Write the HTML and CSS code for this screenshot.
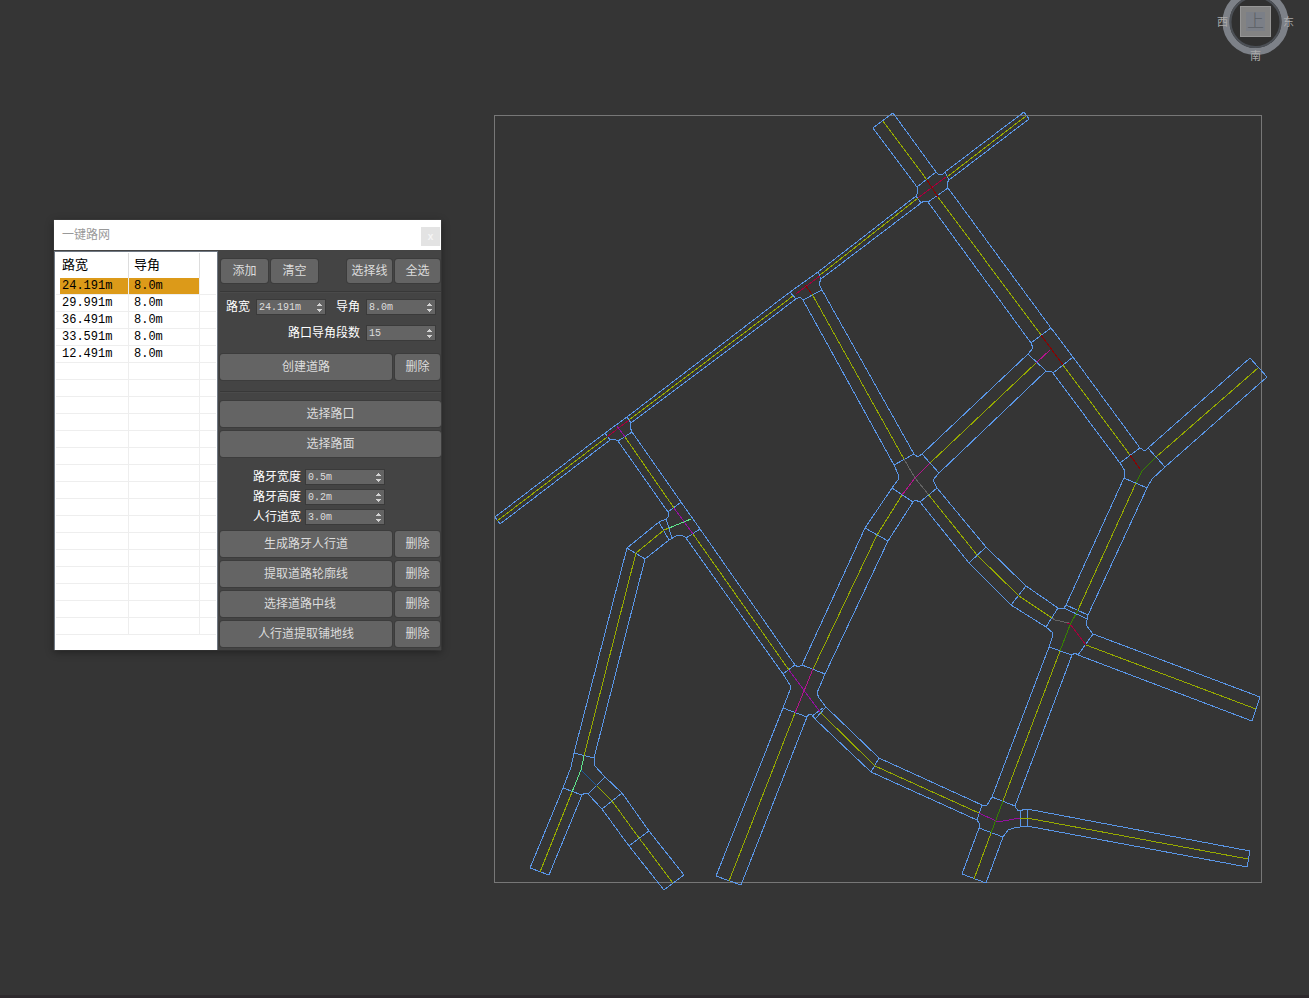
FILE: index.html
```html
<!DOCTYPE html>
<html lang="zh-CN">
<head>
    <meta charset="UTF-8">
    <meta name="viewport" content="width=device-width, initial-scale=1.0">
    <title>一键路网</title>
    <link rel="stylesheet" href="styles.css">
</head>
<body>
    <svg width="0" height="0" class="defs">
        <symbol id="spin" viewBox="0 0 5 9">
            <path d="M2 0h1v1h1v1h1v1H0V2h1V1h1z M0 6h5v1H4v1H3v1H2V8H1V7H0z"/>
        </symbol>
    </svg>

    <main class="viewport">
        <!-- road network -->
        <svg class="roads" viewBox="484 104 790 790">
            <rect class="frame" x="494.5" y="115.5" width="767" height="767"/>
            <g class="edge">
                <!-- north crossing -->
                <path d="M917 187L873 128L893 113L936 172L917 187L918 192L916 196L921 203L924 201L928 202L948 188L947 183L949 180L945 172L943 174L938 174L936 172"/>
                <path d="M945 172L1024 112L1029 119L949 180"/>
                <path d="M928 202L1031 343M948 188L1051 328"/>
                <path d="M916 196L818 272M921 203L821 279"/>
                <!-- second crossing -->
                <path d="M818 272L821 279L819 284L822 290L803 300L800 297L796 299L790 292L818 272"/>
                <path d="M803 300L894 465M822 290L914 454"/>
                <path d="M790 292L627 417M796 299L631 423"/>
                <!-- west crossing -->
                <path d="M627 417L631 423L630 427L632 432L618 441L614 439L610 440L605 433Z"/>
                <path d="M605 433L495 517L500 524L610 440"/>
                <path d="M618 441L668 512L669 516L666 519L659 522L627 548L574 753L571 767L563 788L530 868L549 875L582 795L563 788"/>
                <path d="M632 432L681 502L700 529L686 538L682 535L676 536L669 540L645 559L594 758L594 765L605 777L622 793L649 831L684 875L664 890L629 846L602 809L588 794L585 793L582 795"/>
                <path d="M668 512L681 502M666 519L672 538M659 522L669 540M627 548L645 559M574 753L594 758M605 777L588 794M622 793L602 809M649 831L629 846"/>
                <path d="M686 538L783 674L790 685L790 690L783 708L716 876L741 885L807 717L783 708"/>
                <path d="M700 529L795 665L798 667L802 665L865 528L892 488L898 480L898 474L894 465L914 454L918 457L922 454L1028 354L1033 348L1031 343L1051 328L1073 357L1053 373L1051 371L1046 371L939 473L933 480L937 488L920 502L915 500L913 502L888 541L825 674L817 693L819 698L826 707L879 758L982 805"/>
                <path d="M783 674L795 665M802 665L825 674M865 528L888 541M892 488L913 502M922 454L939 473M1028 354L1046 371"/>
                <path d="M807 717L809 714L812 715L815 719L871 772L977 820M826 707L815 719M823 708L812 716M879 758L871 772"/>
                <!-- middle road running south east -->
                <path d="M920 502L969 563L1011 605L1046 627L1053 633L1052 638L1049 647L992 797L987 805L982 805L977 820L979 823L979 828L962 874L986 883L1003 837L979 828"/>
                <path d="M937 488L986 547L1026 586L1058 608L1064 608L1066 605L1124 478L1125 471L1120 463L1053 373"/>
                <path d="M969 563L986 547M1011 605L1026 586M1046 627L1058 608M1049 647L1072 655M1066 605L1088 615M1064 608L1087 619"/>
                <path d="M1073 357L1140 448L1145 451L1148 448L1250 358L1267 377L1165 467L1152 479L1147 488L1088 615L1086 625L1093 634L1260 697L1252 721L1078 655L1075 653L1072 655L1015 806L1018 811L1027 809L1250 851L1247 867L1027 826L1014 828L1008 830L1003 837"/>
                <path d="M1120 463L1140 448M1148 448L1165 467M1124 478L1147 488M1093 634L1078 655M992 797L1015 806M1020 811V827M1027 809V826"/>
            </g>
            <g class="center">
                <path d="M883 121L927 180M938 197L1041 335M1063 365L1130 455M947 177L1026 116M918 198L820 275M793 296L629 420M607 437L497 521"/>
                <path d="M812 294L904 459M625 437L674 508M693 534L789 670M669 528L664 530L636 553L584 756M572 792L540 872"/>
                <path d="M597 786L612 801L639 838L673 883M813 669L877 535L902 495M795 713L729 881M820 712L875 766L979 813"/>
                <path d="M1036 363L930 463M928 494L977 555L1019 596L1052 618M1003 801L1060 651M991 833L974 879M1020 818L1027 818L1248 859"/>
                <path d="M1086 645L1256 709M1078 610L1136 483M1156 457L1258 368"/>
            </g>
            <path class="crimson" d="M918 198L946 177M796 294L820 276M607 437L629 420M1067 623L1070 624L1086 645"/>
            <path class="red" d="M927 180L938 197M1041 335L1063 365M1130 455L1140 469"/>
            <path class="purple" d="M617 426L625 437M674 508L693 534M789 670L820 712M979 813L996 821L1003 821L1020 818"/>
            <path class="magenta" d="M813 669L795 713M930 463L915 478L902 495M1036 363L1050 350"/>
            <path class="mint" d="M669 528L691 519M584 756L581 770L572 792"/>
            <path class="green" d="M1156 457L1142 471L1136 483M1078 610L1070 625L1060 651M1003 801L991 833"/>
            <path class="grey" d="M904 459L915 478L928 494M1052 618L1055 620L1069 623"/>
            <path class="red" d="M805 285L812 294"/>
            <path class="blue" d="M581 770L597 786"/>
        </svg>

        <!-- view cube -->
        <svg class="cube" viewBox="1212 0 88 64">
            <circle cx="1255.5" cy="22" r="29.5" class="ring"/>
            <circle cx="1255.5" cy="22" r="25" class="ring-inner"/>
            <rect x="1240.5" y="6.5" width="30" height="30" class="face"/>
            <rect x="1246" y="12" width="19" height="19" class="face-mark"/>
            <text x="1255.5" y="27" class="top">上</text>
            <text x="1222.5" y="26">西</text>
            <text x="1288.5" y="26">东</text>
            <text x="1255.5" y="60">南</text>
        </svg>

        <section class="window">
            <header class="titlebar">
                <h1>一键路网</h1>
                <button class="close" aria-label="关闭">x</button>
            </header>
            <div class="content">
                <div class="list">
                    <table>
                        <thead>
                            <tr><th>路宽</th><th>导角</th><th></th></tr>
                        </thead>
                        <tbody>
                            <tr class="selected"><td>24.191m</td><td>8.0m</td><td></td></tr>
                            <tr><td>29.991m</td><td>8.0m</td><td></td></tr>
                            <tr><td>36.491m</td><td>8.0m</td><td></td></tr>
                            <tr><td>33.591m</td><td>8.0m</td><td></td></tr>
                            <tr><td>12.491m</td><td>8.0m</td><td></td></tr>
                            <tr><td></td><td></td><td></td></tr>
                            <tr><td></td><td></td><td></td></tr>
                            <tr><td></td><td></td><td></td></tr>
                            <tr><td></td><td></td><td></td></tr>
                            <tr><td></td><td></td><td></td></tr>
                            <tr><td></td><td></td><td></td></tr>
                            <tr><td></td><td></td><td></td></tr>
                            <tr><td></td><td></td><td></td></tr>
                            <tr><td></td><td></td><td></td></tr>
                            <tr><td></td><td></td><td></td></tr>
                            <tr><td></td><td></td><td></td></tr>
                            <tr><td></td><td></td><td></td></tr>
                            <tr><td></td><td></td><td></td></tr>
                            <tr><td></td><td></td><td></td></tr>
                            <tr><td></td><td></td><td></td></tr>
                            <tr><td></td><td></td><td></td></tr>
                        </tbody>
                    </table>
                </div>

                <div class="tools">
                    <div class="toolbar">
                        <button>添加</button>
                        <button>清空</button>
                        <button class="push">选择线</button>
                        <button>全选</button>
                    </div>
                    <hr>
                    <div class="params">
                        <div class="field">
                            <label for="width">路宽</label>
                            <span class="spinner"><input type="text" id="width" value="24.191m"><svg><use href="#spin"/></svg></span>
                        </div>
                        <div class="field">
                            <label for="corner">导角</label>
                            <span class="spinner"><input type="text" id="corner" value="8.0m"><svg><use href="#spin"/></svg></span>
                        </div>
                        <div class="field wide">
                            <label for="segments">路口导角段数</label>
                            <span class="spinner"><input type="text" id="segments" value="15"><svg><use href="#spin"/></svg></span>
                        </div>
                    </div>
                    <div class="row">
                        <button>创建道路</button>
                        <button class="delete">删除</button>
                    </div>
                    <hr class="split">
                    <div class="stack">
                        <button>选择路口</button>
                        <button>选择路面</button>
                    </div>
                    <div class="sizes">
                        <div class="field">
                            <label for="curb-width">路牙宽度</label>
                            <span class="spinner"><input type="text" id="curb-width" value="0.5m"><svg><use href="#spin"/></svg></span>
                        </div>
                        <div class="field">
                            <label for="curb-height">路牙高度</label>
                            <span class="spinner"><input type="text" id="curb-height" value="0.2m"><svg><use href="#spin"/></svg></span>
                        </div>
                        <div class="field">
                            <label for="walk-width">人行道宽</label>
                            <span class="spinner"><input type="text" id="walk-width" value="3.0m"><svg><use href="#spin"/></svg></span>
                        </div>
                    </div>
                    <div class="stack">
                        <div class="row">
                            <button>生成路牙人行道</button>
                            <button class="delete">删除</button>
                        </div>
                        <div class="row">
                            <button>提取道路轮廓线</button>
                            <button class="delete">删除</button>
                        </div>
                        <div class="row offset">
                            <button>选择道路中线</button>
                            <button class="delete">删除</button>
                        </div>
                        <div class="row">
                            <button>人行道提取铺地线</button>
                            <button class="delete">删除</button>
                        </div>
                    </div>
                </div>
            </div>
        </section>
    </main>
</body>
</html>
```
FILE: styles.css
```css
* {
    box-sizing: border-box;
}

body {
    margin: 0;
    background-color: #353535;
    font-family: "Liberation Mono", "Noto Sans CJK SC", monospace;
    font-size: 12px;
}

.defs {
    position: absolute;
}

.viewport {
    position: relative;
    min-height: 100vh;
    overflow: hidden;
    border-bottom: 3px solid #2e2a2d;
}

/* drawing */
.roads {
    position: absolute;
    left: 484px;
    top: 104px;
    width: 790px;
    height: 790px;
    fill: none;
    shape-rendering: crispEdges;
}

.frame { stroke: #777; }
.edge { stroke: #5a96e6; }
.center { stroke: #96aa00; }
.crimson { stroke: #a5003c; }
.red { stroke: #8c0000; }
.purple { stroke: #960fa0; }
.magenta { stroke: #b4148c; }
.mint { stroke: #5fe68c; }
.green { stroke: #378200; }
.grey { stroke: #646464; }
.blue { stroke: #1e5a9b; }

.cube {
    position: absolute;
    top: 0;
    right: 9px;
    width: 88px;
    height: 64px;
    fill: #aaa;
    font-size: 11px;
    text-anchor: middle;
}

.ring {
    fill: none;
    stroke: #7d8188;
    stroke-width: 7;
}

.ring-inner {
    fill: #303030;
    stroke: #4b4f55;
    stroke-width: 2;
}

.face {
    fill: #838383;
    stroke: #969696;
}

.face-mark {
    fill: #7b7f87;
}

.top {
    fill: #5a5e64;
    font-size: 17px;
    font-weight: 300;
}

/* tool window */
.window {
    position: absolute;
    left: 54px;
    top: 220px;
    width: 387px;
    background-color: #444;
    box-shadow: 0 2px 8px rgba(0, 0, 0, 0.4), 0 0 1px #777;
}

.titlebar {
    display: flex;
    justify-content: space-between;
    height: 30px;
    padding-left: 8px;
    background-color: #fff;
}

.titlebar h1 {
    margin: 0;
    color: #999;
    font-size: 12px;
    font-weight: normal;
    line-height: 32px;
}

.close {
    width: 19px;
    height: 19px;
    margin: 7px 1px 0 0;
    padding: 0;
    border: none;
    background-color: #e3e3e3;
    color: #f5f5f5;
    font: bold 10px "Liberation Sans", sans-serif;
}

.content {
    display: flex;
    padding-top: 1px;
}

.list {
    width: 164px;
    padding: 1px;
    border: 1px solid #6f7883;
    border-bottom: none;
    background-color: #fff;
}

.list table {
    width: 100%;
    table-layout: fixed;
    border-collapse: separate;
    border-spacing: 0;
    color: #000;
}

.list th,
.list td {
    height: 17px;
    padding: 0 0 0 6px;
    border-right: 1px solid #eee;
    border-bottom: 1px solid #eee;
    line-height: 16px;
    text-align: left;
    font-weight: normal;
}

.list th {
    height: 25px;
    border-bottom: none;
    border-right-color: #ddd;
    font-size: 13px;
    line-height: 24px;
}

.list th:first-child { width: 73px; }
.list th:nth-child(2) { width: 71px; }

.list th:nth-child(2),
.list td:nth-child(2) {
    padding-left: 5px;
}

.list th:last-child,
.list td:last-child {
    border-right: none;
}

.selected td:first-child {
    background: linear-gradient(to right, #fff 4px, #dc9a19 4px);
}

.selected td:nth-child(2) {
    background-color: #dc9a19;
}

.tools {
    flex: 1;
    padding: 8px 0 3px 2px;
}

.tools button {
    height: 26px;
    padding: 2px 0 0;
    border: none;
    border-radius: 3px;
    box-shadow: 0 0 0 1px #3c3c3c;
    background-color: #646464;
    color: #dcdcdc;
    font-family: inherit;
    font-size: 12px;
    line-height: 24px;
}

.toolbar {
    display: flex;
    gap: 3px;
    padding: 0 1px;
}

.toolbar button {
    width: 47px;
    height: 24px;
    line-height: 22px;
}

.toolbar .push {
    margin-left: auto;
}

.toolbar .push,
.toolbar .push + button {
    width: 45px;
}

.tools hr {
    height: 2px;
    margin: 8px 0 6px;
    border: none;
    border-top: 1px solid #383838;
    border-bottom: 1px solid #4a4a4a;
}

.tools .split {
    margin: 11px 0 8px;
}

.params {
    display: flex;
    flex-wrap: wrap;
    justify-content: flex-end;
    gap: 10px;
    padding: 0 5px 13px 0;
}

.field {
    display: flex;
    align-items: center;
    gap: 5px;
    height: 16px;
    color: #fff;
    line-height: 16px;
}

.field label {
    padding-top: 2px;
}

.params .field {
    gap: 6px;
}

.params .wide {
    width: 100%;
    justify-content: flex-end;
}

.spinner {
    display: flex;
    align-items: center;
    width: 70px;
    height: 16px;
    padding-right: 3px;
    border: 1px solid #3a3a3a;
    background-color: #646464;
}

.spinner input {
    flex: 1;
    min-width: 0;
    padding: 0 0 0 2px;
    border: none;
    background: none;
    color: #ddd;
    font-family: inherit;
    font-size: 10px;
}

.spinner svg {
    width: 5px;
    height: 9px;
    fill: #d2d2d2;
    shape-rendering: crispEdges;
}

.row {
    display: flex;
    gap: 3px;
    padding-right: 1px;
}

.row button {
    flex: 1;
}

.row .delete {
    flex: none;
    width: 45px;
}

.row.offset button:first-child {
    padding-right: 12px;
}

.stack {
    display: flex;
    flex-direction: column;
    gap: 4px;
}

.sizes {
    display: flex;
    flex-direction: column;
    align-items: flex-end;
    gap: 4px;
    padding: 12px 56px 6px 0;
}

.sizes .spinner {
    width: 80px;
}

.sizes .field {
    gap: 4px;
}
```
